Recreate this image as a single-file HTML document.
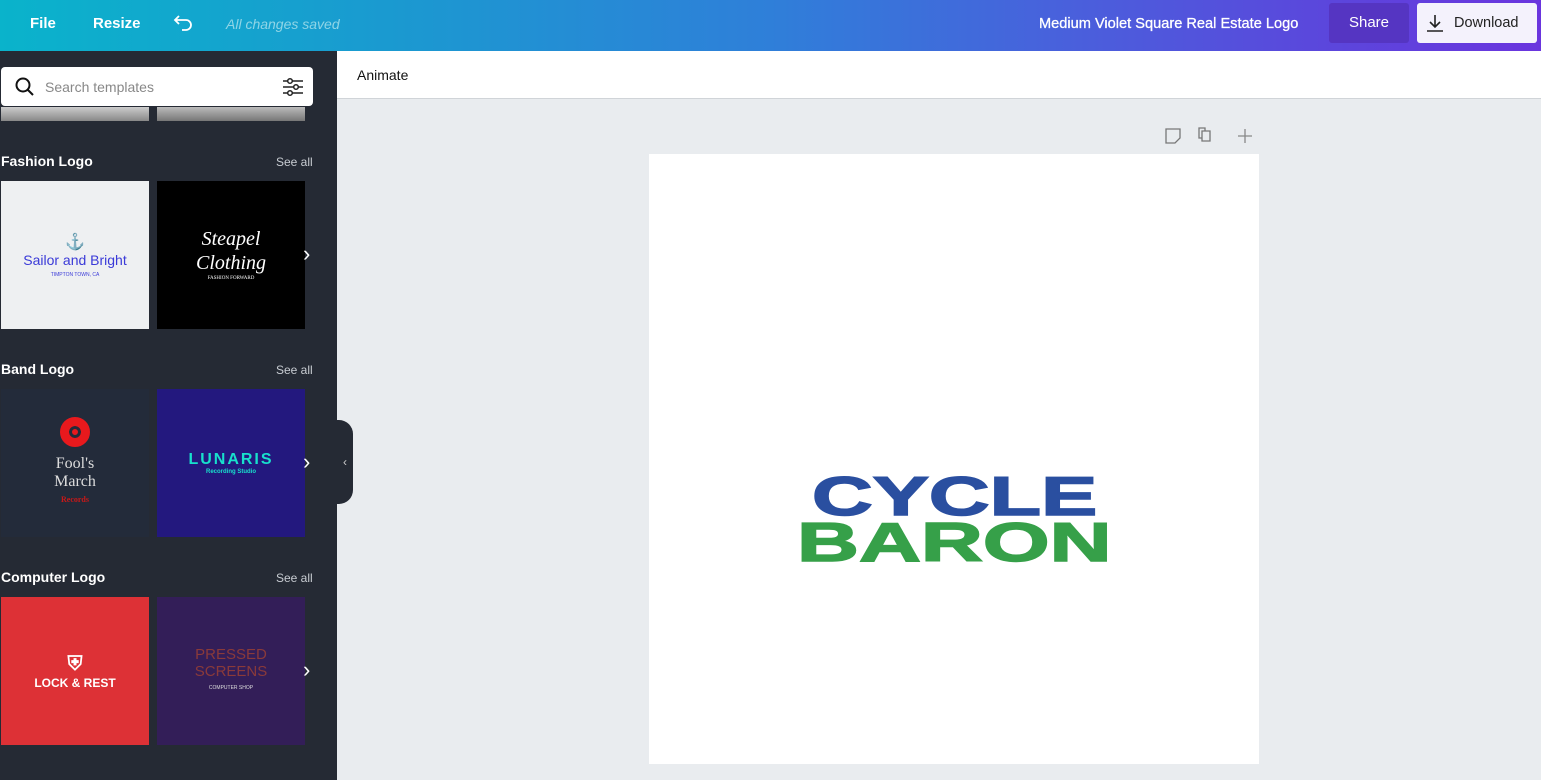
<!DOCTYPE html>
<html><head><style>
*{margin:0;padding:0;box-sizing:border-box}
body{width:1541px;height:780px;overflow:hidden;font-family:"Liberation Sans",sans-serif;background:#e9ecef;position:relative}
.top{position:absolute;left:0;top:0;width:1541px;height:51px;background:linear-gradient(90deg,#0ab3cb 0%,#1a9ad0 25%,#2f7fd9 50%,#4a5fdc 70%,#5a48dc 85%,#6a35de 100%);color:#fff;font-size:15px}
.top span{position:absolute;top:15px}
.side{position:absolute;left:0;top:51px;width:337px;height:729px;background:#252a34;overflow:hidden}
.search{position:absolute;left:1px;top:16px;width:312px;height:39px;background:#fff;border-radius:4px}
.h{position:absolute;left:1px;color:#fff;font-weight:bold;font-size:14px}
.sa{position:absolute;left:276px;color:#c8ccd2;font-size:12px}
.t{position:absolute;width:148px;height:148px;overflow:hidden;display:flex;align-items:center;justify-content:center;flex-direction:column}
.arr{position:absolute;left:303px;color:#fff;font-size:22px}
.anim{position:absolute;left:337px;top:51px;width:1204px;height:48px;background:#fff;border-bottom:1px solid #d0d4d8}
.canvas{position:absolute;left:649px;top:154px;width:610px;height:610px;background:#fff}
.logo{position:absolute;font-family:"Liberation Sans",sans-serif;font-weight:bold;transform-origin:left top;font-size:55px;line-height:55px;white-space:nowrap;-webkit-text-stroke:1.5px currentColor}
</style></head><body>
<div class="top">
<span style="left:30px;font-weight:bold">File</span>
<span style="left:93px;font-weight:bold">Resize</span>
<svg style="position:absolute;left:173px;top:13px" width="22" height="20" viewBox="0 0 22 20"><path d="M6 3 L2 7 L6 11 M2 7 H13 A5 5 0 0 1 13 17 H9" fill="none" stroke="#fff" stroke-width="1.8"/></svg>
<span style="left:226px;font-style:italic;color:#8fd5e6;font-size:14px;top:16px">All changes saved</span>
<span style="left:1039px;font-size:14.6px;top:16px;-webkit-text-stroke:0.3px #fff">Medium Violet Square Real Estate Logo</span>
<div style="position:absolute;left:1329px;top:3px;width:80px;height:40px;background:#5535c2;border-radius:3px;text-align:center;line-height:40px">Share</div>
<div style="position:absolute;left:1417px;top:3px;width:120px;height:40px;background:#f4f2fc;border-radius:3px;color:#222;line-height:40px;padding-left:37px;font-size:14.5px">Download
<svg style="position:absolute;left:9px;top:11px" width="18" height="18" viewBox="0 0 18 18"><path d="M9 1V13M4 8L9 13L14 8M1 17H17" fill="none" stroke="#222" stroke-width="1.6"/></svg></div>
</div>
<div class="side">
<div style="position:absolute;left:1px;top:56px;width:148px;height:14px;background:linear-gradient(#ccc,#888)"></div>
<div style="position:absolute;left:157px;top:56px;width:148px;height:14px;background:linear-gradient(#bbb,#777)"></div>
<div class="search">
<svg style="position:absolute;left:14px;top:10px" width="20" height="20" viewBox="0 0 20 20"><circle cx="8" cy="8" r="6.5" fill="none" stroke="#111" stroke-width="2"/><path d="M13 13L18 18" stroke="#111" stroke-width="2"/></svg>
<span style="position:absolute;left:44px;top:12px;color:#888;font-size:14px">Search templates</span>
<svg style="position:absolute;left:281px;top:10px" width="22" height="20" viewBox="0 0 22 20"><path d="M1 4H21M1 10H21M1 16H21" stroke="#222" stroke-width="1.5"/><circle cx="8" cy="4" r="2.3" fill="#fff" stroke="#222" stroke-width="1.5"/><circle cx="14" cy="10" r="2.3" fill="#fff" stroke="#222" stroke-width="1.5"/><circle cx="8" cy="16" r="2.3" fill="#fff" stroke="#222" stroke-width="1.5"/></svg>
</div>
<div class="h" style="top:102px">Fashion Logo</div><div class="sa" style="top:104px">See all</div>
<div class="t" style="left:1px;top:130px;background:#eef0f2;color:#3a3ad8"><div style="font-size:16px">⚓</div><div style="font-size:14px">Sailor and Bright</div><div style="font-size:5px;margin-top:4px">TIMPTON TOWN, CA</div></div>
<div class="t" style="left:157px;top:130px;background:#000;color:#fff;font-family:'Liberation Serif',serif;font-style:italic;font-size:20px;line-height:24px"><div>Steapel</div><div>Clothing</div><div style="font-size:5px;font-style:normal;line-height:8px">FASHION FORWARD</div></div>
<div class="arr" style="top:190px">›</div>
<div class="h" style="top:310px">Band Logo</div><div class="sa" style="top:312px">See all</div>
<div class="t" style="left:1px;top:338px;background:#232b3a;color:#ddd;font-family:'Liberation Serif',serif;font-size:16px;line-height:18px"><div style="width:30px;height:30px;border-radius:50%;background:#e8191d;border:9px solid #e8191d;box-shadow:inset 0 0 0 3px #232b3a;margin-bottom:8px"></div><div>Fool's</div><div>March</div><div style="color:#c81818;font-size:8px;font-weight:bold">Records</div></div>
<div class="t" style="left:157px;top:338px;background:#23187e;color:#18e0cc;font-weight:900;font-size:16px;letter-spacing:2px"><div>LUNARIS</div><div style="font-size:6px;letter-spacing:0">Recording Studio</div></div>
<div class="arr" style="top:398px">›</div>
<div class="h" style="top:518px">Computer Logo</div><div class="sa" style="top:520px">See all</div>
<div class="t" style="left:1px;top:546px;background:#dd3136;color:#fff;font-weight:bold;font-size:12px"><div style="font-size:20px">⛨</div><div>LOCK &amp; REST</div></div>
<div class="t" style="left:157px;top:546px;background:#331e58;color:#8a3a3a;font-size:15px;line-height:17px"><div>PRESSED</div><div>SCREENS</div><div style="color:#ddd;font-size:5px">COMPUTER SHOP</div></div>
<div class="arr" style="top:606px">›</div>
</div>
<div style="position:absolute;left:337px;top:420px;width:16px;height:84px;background:#252a34;border-radius:0 14px 14px 0;color:#ccc;font-size:12px;line-height:84px;text-align:center">‹</div>
<div class="anim"><span style="position:absolute;left:20px;top:16px;font-size:14px;color:#111">Animate</span></div>
<svg style="position:absolute;left:1164px;top:127px" width="92" height="18" viewBox="0 0 92 18"><path d="M2 2H16V11L11 16H2Z" fill="none" stroke="#777" stroke-width="1.3"/><path d="M38 4H46V14H38ZM41 4V1H35V11H38" fill="none" stroke="#777" stroke-width="1.3"/><path d="M81 2V16M74 9H88" stroke="#888" stroke-width="1.3"/></svg>
<div class="canvas"></div>
<div class="logo" style="left:812px;top:469px;color:#2a4fa0;transform:scaleX(1.53)">CYCLE</div>
<div class="logo" style="left:797px;top:515px;color:#36a049;transform:scaleX(1.56)">BARON</div>
</body></html>
